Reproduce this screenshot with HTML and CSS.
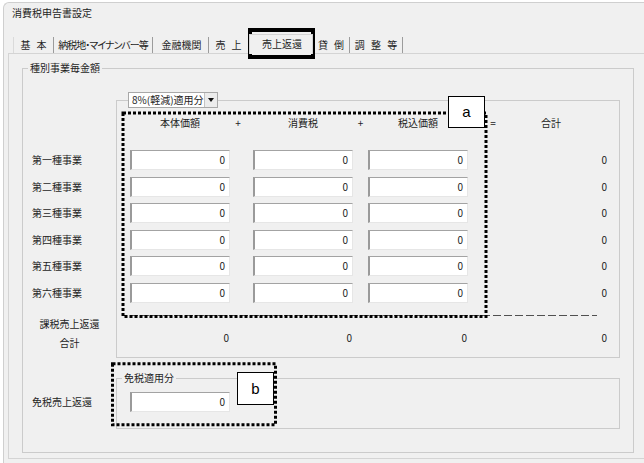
FILE: index.html
```html
<!DOCTYPE html>
<html>
  <head>
    <meta charset="utf-8">
    <title>消費税申告書設定</title>

    <link rel="stylesheet" href="styles.css">
  </head>

  <body>
    <div id="window">
      <div class="caption">消費税申告書設定</div>

      <div class="tabs">
        <div class="tab spaced">基 本</div>
        <div class="tab narrow">納税地・マイナンバー等</div>
        <div class="tab">金融機関</div>
        <div class="tab spaced">売 上</div>
        <div class="tab active">売上返還</div>
        <div class="tab spaced">貸 倒</div>
        <div class="tab spaced">調 整 等</div>
      </div>

      <div class="page">
        <fieldset class="group">
          <legend>種別事業毎金額</legend>

          <div class="section">
            <div class="labels">
              <div class="rowLabel">第一種事業</div>
              <div class="rowLabel">第二種事業</div>
              <div class="rowLabel">第三種事業</div>
              <div class="rowLabel">第四種事業</div>
              <div class="rowLabel">第五種事業</div>
              <div class="rowLabel">第六種事業</div>
              <div class="sumLabel">課税売上返還<br>合計</div>
            </div>

            <fieldset class="box">
              <legend class="comboLegend">
                <span class="combo">
                  <span class="comboText">8%(軽減)適用分</span>
                  <span class="comboBtn"></span>
                </span>
              </legend>

              <div class="grid">
                <div class="head">本体価額</div>
                <div class="op plus1">+</div>
                <div class="head">消費税</div>
                <div class="op">+</div>
                <div class="head">税込価額</div>
                <div class="op">=</div>
                <div class="head total">合計</div>

                <div class="field c1">0</div><div class="field c2">0</div><div class="field c3">0</div><div class="sum c4">0</div>
                <div class="field c1">0</div><div class="field c2">0</div><div class="field c3">0</div><div class="sum c4">0</div>
                <div class="field c1">0</div><div class="field c2">0</div><div class="field c3">0</div><div class="sum c4">0</div>
                <div class="field c1">0</div><div class="field c2">0</div><div class="field c3">0</div><div class="sum c4">0</div>
                <div class="field c1">0</div><div class="field c2">0</div><div class="field c3">0</div><div class="sum c4">0</div>
                <div class="field c1">0</div><div class="field c2">0</div><div class="field c3">0</div><div class="sum c4">0</div>
              </div>

              <div class="rule"></div>

              <div class="grid totals">
                <div class="sum c1">0</div>
                <div class="sum c2">0</div>
                <div class="sum c3">0</div>
                <div class="sum c4">0</div>
              </div>
            </fieldset>
          </div>

          <div class="section exempt">
            <div class="labels">
              <div class="rowLabel">免税売上返還</div>
            </div>

            <fieldset class="box small">
              <legend>免税適用分</legend>
              <div class="field">0</div>
            </fieldset>
          </div>
        </fieldset>
      </div>
    </div>

    <!-- callouts drawn on top of the dialog -->
    <svg class="marks" width="644" height="463">
      <rect class="tabMark" x="250" y="30" width="63" height="27" />

      <rect class="dots" x="123" y="113" width="363" height="203.5" />
      <rect class="tag" x="448.5" y="96.5" width="36" height="31" />
      <text class="tagText" x="466.5" y="116.5">a</text>

      <rect class="dots" x="112.5" y="363.8" width="163" height="61" />
      <rect class="tag" x="237.5" y="372.5" width="36" height="32" />
      <text class="tagText" x="255.5" y="393.5">b</text>
    </svg>
  </body>
</html>
```

FILE: styles.css
```css
body {
  margin: 0;
  background: #fff;
  overflow: hidden;

  font-family: "Noto Sans CJK JP", "Noto Sans", sans-serif;
  font-size: 10px;
  font-feature-settings: "palt";
  color: #1e1e1e;
}

/* the dialog runs off the right and bottom of the view */
#window {
  width: 640px;
  height: 460px;
  margin: 2px 0 0 3px;
  border: 1px solid #cfcfcf;
  border-right: none;
  border-bottom: none;
  border-radius: 6px 0 0 0;
  background: #f0f0f0;
}

.caption {
  height: 20px;
  line-height: 20px;
  padding-left: 8px;
}

/* tab strip */
.tabs {
  display: flex;
  align-items: flex-end;
  height: 16px;
  margin-top: 14px;
  padding-left: 9px;
}
.tab {
  box-sizing: border-box;
  height: 16px;
  line-height: 16px;
  padding-left: 2px;
  text-align: center;
  border-right: 1px solid #9c9c9c;
  white-space: nowrap;
  overflow: hidden;
}
.tab.spaced {
  letter-spacing: 2px;
}
.tab.narrow {
  padding-left: 0;
  letter-spacing: -1px;
}
.tab:nth-child(1) { width: 41px; border-left: 1px solid #dadada; }
.tab:nth-child(2) { width: 99px; }
.tab:nth-child(3) { width: 56px; }
.tab:nth-child(4) { width: 40px; }
.tab:nth-child(5) { width: 64px; }
.tab:nth-child(6) { width: 37px; }
.tab:nth-child(7) { width: 53px; }

.tab.active {
  position: relative;
  z-index: 1;
  height: 20px;
  line-height: 18px;
  margin-bottom: -1px;
  background: #f0f0f0;
  border: 1px solid #d4d4d4;
  border-bottom: none;
}

.page {
  height: 397px;
  margin-left: 4px;
  padding: 7px 0 0 13px;
  border: 1px solid #d4d4d4;
  border-right: none;
}

/* group boxes */
fieldset {
  margin: 0;
  min-width: 0;
  border: 1px solid #cbcbcb;
}
legend {
  padding: 0 2px;
  line-height: 14px;
}

.group {
  box-sizing: border-box;
  width: 612px;
  padding: 17px 13px 23px 0;
}
.group > legend {
  margin-left: 5px;
}

.section {
  display: flex;
}
.section.exempt {
  margin-top: 13px;
}

.labels {
  flex: none;
  width: 93px;
  padding-top: 58px;
}
.exempt .labels {
  padding-top: 21px;
}
.rowLabel {
  height: 26.5px;
  line-height: 20px;
  padding-left: 9px;
}
.sumLabel {
  margin-top: 4.5px;
  line-height: 19px;
  text-align: center;
}

.box {
  flex: 1;
  padding: 8px 11px 10px 13px;
}
.box.small {
  padding: 7px 0 16px 13px;
}
.box.small legend {
  margin-left: -8px;
}

/* combo box used as the legend of the 8% box */
.comboLegend {
  margin-left: -2px;
  padding: 0;
}
.combo {
  display: flex;
  box-sizing: border-box;
  width: 90px;
  height: 16px;
  border: 1px solid #a8a8a8;
  background: #fff;
}
.comboText {
  flex: 1;
  padding-left: 3px;
  line-height: 14px;
  white-space: nowrap;
}
.comboBtn {
  position: relative;
  width: 12px;
  border-left: 1px solid #c4c4c4;
  background: #ececec;
}
.comboBtn::after {
  content: "";
  position: absolute;
  left: 3px;
  top: 5px;
  border-left: 3px solid transparent;
  border-right: 3px solid transparent;
  border-top: 4px solid #111;
}

/* amount table */
.grid {
  display: grid;
  grid-template-columns: 100px 23px 100px 15px 100px 50px 90px;
  grid-template-rows: 34px;
  grid-auto-rows: 26.5px;
}
.grid.totals {
  margin-top: 13px;
  grid-template-rows: 18px;
}
.head,
.op {
  line-height: 14px;
  text-align: center;
}
.op.plus1 {
  padding-right: 7px;
}
.head.total {
  padding-right: 24px;
}

.c1 { grid-column: 1; }
.c2 { grid-column: 3; }
.c3 { grid-column: 5; }
.c4 { grid-column: 7; }

.field {
  box-sizing: border-box;
  width: 100px;
  height: 20px;
  padding-right: 4px;
  line-height: 18px;
  text-align: right;
  background: #fff;
  border-style: solid;
  border-width: 1px 1px 1px 2px;
  border-color: #a3a3a3 #e6e6e6 #e6e6e6 #9a9a9a;
}
.sum {
  line-height: 20px;
  padding-right: 1px;
  text-align: right;
}
.totals .sum {
  line-height: 18px;
}

.rule {
  height: 1px;
  margin: 6px 11px 0 0;
  background: repeating-linear-gradient(to right, #505050 0 8px, transparent 8px 11px);
}

/* callouts */
.marks {
  position: absolute;
  left: 0;
  top: 0;
  pointer-events: none;
}
.tabMark {
  fill: none;
  stroke: #000;
  stroke-width: 4;
}
.dots {
  fill: none;
  stroke: #000;
  stroke-width: 3;
  stroke-dasharray: 3 2;
}
.tag {
  fill: #fff;
  stroke: #000;
  stroke-width: 1;
}
.tagText {
  font-family: "Liberation Sans", Arial, sans-serif;
  font-size: 15px;
  text-anchor: middle;
}
```
